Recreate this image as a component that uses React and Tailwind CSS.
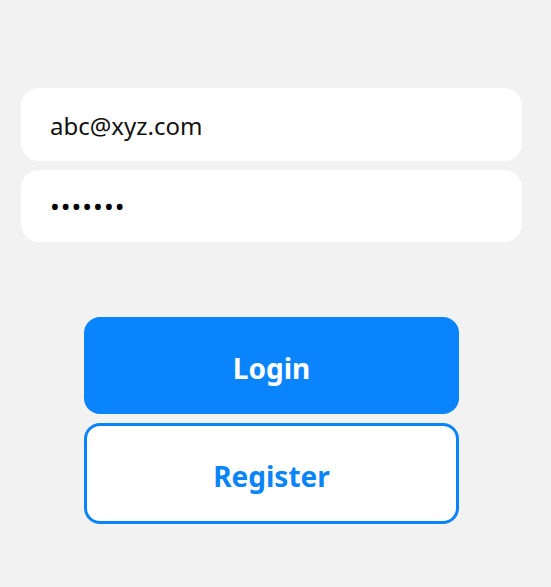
import React, { useState } from "react";

const App = () => {
  const [email, setEmail] = useState("abc@xyz.com");
  const [password, setPassword] = useState("1234567");

  return (
    <div
      className="min-h-screen w-full bg-[#f2f2f2] pt-[88px] px-[21px]"
      style={{ fontFamily: '"Noto Sans", "Open Sans", sans-serif' }}
    >
      <div className="w-[501px] flex flex-col gap-[9px]">
        <input
          className="h-[73px] w-full rounded-[18px] bg-white px-[29px] pt-[2px] text-[24px] text-[#111] outline-none"
          type="email"
          value={email}
          onChange={(e) => setEmail(e.target.value)}
        />
        <input
          className="h-[72px] w-full rounded-[18px] bg-white px-[29px] text-[26px] tracking-[1px] text-black outline-none"
          type="password"
          value={password}
          onChange={(e) => setPassword(e.target.value)}
        />
      </div>

      <div className="mt-[75px] ml-[63px] w-[375px] flex flex-col gap-[9px]">
        <button
          className="h-[97px] w-full rounded-[16px] bg-[#0a84fb] pt-[4px] text-[28px] font-bold text-white"
          type="button"
        >
          Login
        </button>
        <button
          className="h-[101px] w-full rounded-[16px] border-[3px] border-[#0a84fb] bg-white pt-[4px] text-[28px] font-bold text-[#0a84fb]"
          type="button"
        >
          Register
        </button>
      </div>
    </div>
  );
};

export default App;
